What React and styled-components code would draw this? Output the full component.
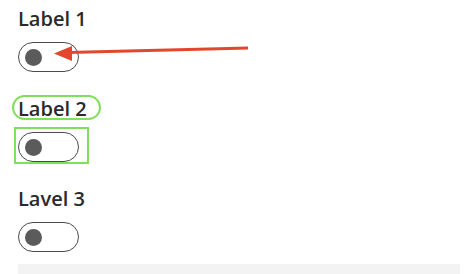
import React, { useState } from "react";
import styled, { createGlobalStyle } from "styled-components";

const GlobalStyle = createGlobalStyle`
  html, body {
    margin: 0;
    padding: 0;
    background: #ffffff;
  }
  body {
    font-family: "Open Sans", "Noto Sans", sans-serif;
    color: #222;
  }
`;

const Page = styled.div`
  position: relative;
  width: 474px;
  height: 274px;
  overflow: hidden;
  padding: 5px 14px 0 18px;
  box-sizing: border-box;
`;

const FieldList = styled.div`
  display: flex;
  flex-direction: column;
  gap: 23px;
`;

const Field = styled.div`
  display: flex;
  flex-direction: column;
  align-items: flex-start;
  gap: 9px;
`;

const Label = styled.span`
  position: relative;
  font-size: 20px;
  font-weight: 550;
  line-height: 28px;
  color: #2a2a2a;

  &::after {
    content: "";
    display: ${(p) => (p.$marked ? "block" : "none")};
    position: absolute;
    top: 0;
    bottom: 3px;
    left: -6px;
    right: -14px;
    border: 2.5px solid #80e05d;
    border-radius: 13px;
  }
`;

const SwitchFrame = styled.div`
  position: relative;
  display: flex;

  &::after {
    content: "";
    display: ${(p) => (p.$marked ? "block" : "none")};
    position: absolute;
    top: -5px;
    bottom: -2px;
    left: -4px;
    right: -10px;
    border: 2.5px solid #80e05d;
  }
`;

const Track = styled.button`
  position: relative;
  width: 61px;
  height: 30px;
  padding: 0 6px;
  box-sizing: border-box;
  display: flex;
  align-items: center;
  justify-content: ${(p) => (p.$on ? "flex-end" : "flex-start")};
  border: 1.6px solid #4a4a4a;
  border-radius: 15px;
  background: #fff;
  cursor: pointer;
  outline: none;
`;

const Knob = styled.span`
  width: 17px;
  height: 17px;
  border-radius: 50%;
  background: #5b5b5b;
`;

const Footer = styled.div`
  margin-top: 12px;
  height: 12px;
  background: #f3f3f3;
`;

const Arrow = styled.svg`
  position: absolute;
  left: 0;
  top: 0;
  pointer-events: none;
`;

const Toggle = ({ marked }) => {
  const [on, setOn] = useState(false);
  return (
    <SwitchFrame $marked={marked}>
      <Track $on={on} onClick={() => setOn(!on)}>
        <Knob />
      </Track>
    </SwitchFrame>
  );
};

const fields = [
  { label: "Label 1" },
  { label: "Label 2", marked: true },
  { label: "Lavel 3" },
];

export default function App() {
  return (
    <>
      <GlobalStyle />
      <Page>
        <FieldList>
          {fields.map((f) => (
            <Field key={f.label}>
              <Label $marked={f.marked}>{f.label}</Label>
              <Toggle marked={f.marked} />
            </Field>
          ))}
        </FieldList>
        <Footer />
        <Arrow width="474" height="274" viewBox="0 0 474 274">
          <line x1="248" y1="48" x2="68" y2="52.5" stroke="#e2472e" strokeWidth="3" />
          <polygon points="54,53.5 72,46 72,61" fill="#e2472e" />
        </Arrow>
      </Page>
    </>
  );
}
